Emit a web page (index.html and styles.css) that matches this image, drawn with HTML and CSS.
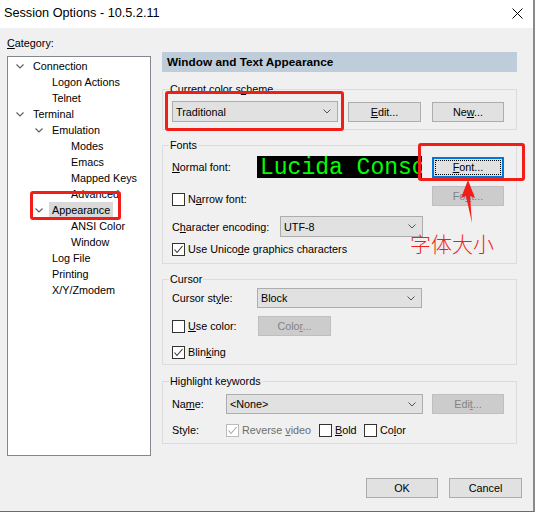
FILE: index.html
```html
<!DOCTYPE html>
<html>
<head>
<meta charset="utf-8">
<title>Session Options</title>
<link rel="stylesheet" href="styles.css">
</head>
<body>
<div class="window">
  <div class="titlebar">
    <span class="title">Session Options - 10.5.2.11</span>
    <svg class="close" width="11" height="11" viewBox="0 0 11 11"><path d="M0.5 0.5 L10.5 10.5 M10.5 0.5 L0.5 10.5" stroke="#000" stroke-width="1" fill="none"/></svg>
  </div>
  <div class="content">
    <div class="left">
      <div class="cat-label"><u>C</u>ategory:</div>
      <div class="tree">
        <div class="row l0"><span class="chev"><svg width="8" height="5" viewBox="0 0 8 5"><polyline points="0.5,0.5 4,4 7.5,0.5" fill="none" stroke="#606060" stroke-width="1.2"/></svg></span><span class="txt">Connection</span></div>
        <div class="row l1"><span class="chev"></span><span class="txt">Logon Actions</span></div>
        <div class="row l1"><span class="chev"></span><span class="txt">Telnet</span></div>
        <div class="row l0"><span class="chev"><svg width="8" height="5" viewBox="0 0 8 5"><polyline points="0.5,0.5 4,4 7.5,0.5" fill="none" stroke="#606060" stroke-width="1.2"/></svg></span><span class="txt">Terminal</span></div>
        <div class="row l1"><span class="chev"><svg width="8" height="5" viewBox="0 0 8 5"><polyline points="0.5,0.5 4,4 7.5,0.5" fill="none" stroke="#606060" stroke-width="1.2"/></svg></span><span class="txt">Emulation</span></div>
        <div class="row l2"><span class="chev"></span><span class="txt">Modes</span></div>
        <div class="row l2"><span class="chev"></span><span class="txt">Emacs</span></div>
        <div class="row l2"><span class="chev"></span><span class="txt">Mapped Keys</span></div>
        <div class="row l2"><span class="chev"></span><span class="txt">Advanced</span></div>
        <div class="row l1 sel"><span class="chev"><svg width="8" height="5" viewBox="0 0 8 5"><polyline points="0.5,0.5 4,4 7.5,0.5" fill="none" stroke="#606060" stroke-width="1.2"/></svg></span><span class="txt">Appearance</span></div>
        <div class="row l2"><span class="chev"></span><span class="txt">ANSI Color</span></div>
        <div class="row l2"><span class="chev"></span><span class="txt">Window</span></div>
        <div class="row l1"><span class="chev"></span><span class="txt">Log File</span></div>
        <div class="row l1"><span class="chev"></span><span class="txt">Printing</span></div>
        <div class="row l1"><span class="chev"></span><span class="txt">X/Y/Zmodem</span></div>
      </div>
    </div>

    <div class="right">
      <div class="header">Window and Text Appearance</div>

      <fieldset class="group g-scheme">
        <legend>Current color s<u>c</u>heme</legend>
        <div class="gbody">
          <div class="line">
            <div class="select w-scheme"><span>Traditional</span><svg width="8" height="5" viewBox="0 0 8 5"><polyline points="0.5,0.5 4,4 7.5,0.5" fill="none" stroke="#555" stroke-width="1"/></svg></div>
            <div class="btn w-edit"><span><u>E</u>dit...</span></div>
            <div class="btn w-new"><span>Ne<u>w</u>...</span></div>
          </div>
        </div>
      </fieldset>

      <fieldset class="group g-fonts">
        <legend>Fonts</legend>
        <div class="gbody">
          <div class="line r-normal">
            <span class="lbl w85"><u>N</u>ormal font:</span>
            <div class="preview">Lucida Console</div>
            <div class="btn focus push"><span><u>F</u>ont...</span></div>
          </div>
          <div class="line r-narrow">
            <span class="chk low"><span class="cb"></span><span>N<u>a</u>rrow font:</span></span>
            <div class="btn disabled push"><span>Fo<u>n</u>t...</span></div>
          </div>
          <div class="line r-enc">
            <span class="lbl w108">C<u>h</u>aracter encoding:</span>
            <div class="select w-enc"><span>UTF-8</span><svg width="8" height="5" viewBox="0 0 8 5"><polyline points="0.5,0.5 4,4 7.5,0.5" fill="none" stroke="#555" stroke-width="1"/></svg></div>
          </div>
          <div class="line r-uni">
            <span class="chk"><span class="cb"><svg width="11" height="11" viewBox="0 0 11 11"><polyline points="1.5,5.5 4,8.5 9.5,2" fill="none" stroke="#333" stroke-width="1.1"/></svg></span><span>Use Unico<u>d</u>e graphics characters</span></span>
          </div>
        </div>
      </fieldset>

      <fieldset class="group g-cursor">
        <legend>Cursor</legend>
        <div class="gbody">
          <div class="line r-cstyle">
            <span class="lbl w85">Cursor st<u>y</u>le:</span>
            <div class="select w-cstyle"><span>Block</span><svg width="8" height="5" viewBox="0 0 8 5"><polyline points="0.5,0.5 4,4 7.5,0.5" fill="none" stroke="#555" stroke-width="1"/></svg></div>
          </div>
          <div class="line r-ucolor">
            <span class="chk w86"><span class="cb"></span><span><u>U</u>se color:</span></span>
            <div class="btn disabled w-color"><span>Colo<u>r</u>...</span></div>
          </div>
          <div class="line r-blink">
            <span class="chk"><span class="cb"><svg width="11" height="11" viewBox="0 0 11 11"><polyline points="1.5,5.5 4,8.5 9.5,2" fill="none" stroke="#333" stroke-width="1.1"/></svg></span><span>Blin<u>k</u>ing</span></span>
          </div>
        </div>
      </fieldset>

      <fieldset class="group g-hl">
        <legend>Highlight keywords</legend>
        <div class="gbody">
          <div class="line r-name">
            <span class="lbl w54">Na<u>m</u>e:</span>
            <div class="select w-name"><span>&lt;None&gt;</span><svg width="8" height="5" viewBox="0 0 8 5"><polyline points="0.5,0.5 4,4 7.5,0.5" fill="none" stroke="#555" stroke-width="1"/></svg></div>
            <div class="btn disabled push"><span>Edi<u>t</u>...</span></div>
          </div>
          <div class="line r-style">
            <span class="lbl w54">Style:</span>
            <span class="chk w93 off"><span class="cb"><svg width="11" height="11" viewBox="0 0 11 11"><polyline points="1.5,5.5 4,8.5 9.5,2" fill="none" stroke="#a8a8a8" stroke-width="1.1"/></svg></span><span>Reverse <u>v</u>ideo</span></span>
            <span class="chk w45"><span class="cb"></span><span><u>B</u>old</span></span>
            <span class="chk"><span class="cb"></span><span>Co<u>l</u>or</span></span>
          </div>
        </div>
      </fieldset>

      <div class="footer">
        <div class="btn w-ok"><span>OK</span></div>
        <div class="btn w-cancel"><span>Cancel</span></div>
      </div>
    </div>
  </div>

  <div class="ann ann-tree"></div>
  <div class="ann ann-scheme"></div>
  <div class="ann ann-font"></div>
  <svg class="ann-arrow" width="18" height="46" viewBox="0 0 18 46"><polygon points="8,1 1,19 6,17 12,44 10,17 15,19" fill="#f21d16"/></svg>
  <div class="ann-text">字体大小</div>
</div>
</body>
</html>
```

FILE: styles.css
```css
* { box-sizing: border-box; }
html, body { margin: 0; padding: 0; }
body {
  background: #ffffff;
  width: 537px;
  height: 514px;
  overflow: hidden;
  font-family: "Liberation Sans", Arial, sans-serif;
  font-size: 10.8px;
  color: #000;
}
u { text-decoration: underline; text-underline-offset: 1px; text-decoration-thickness: 1px; }

.window {
  position: relative;
  width: 535px;
  height: 512px;
  background: #f0f0f0;
  border-right: 2px solid #8a8a8a;
  border-bottom: 1px solid #6b6b6b;
  display: flex;
  flex-direction: column;
}

.titlebar {
  height: 28px;
  flex: none;
  background: #fff;
  display: flex;
  align-items: center;
  justify-content: space-between;
  padding: 0 10px 2px 4px;
}
.title { font-size: 12.7px; line-height: 16px; }
.close { display: block; }

.content { flex: 1; display: flex; }

.left { margin-left: 7px; width: 144px; padding-top: 8px; }
.cat-label { height: 14px; line-height: 14px; margin-bottom: 6px; }
.tree {
  height: 400px;
  background: #fff;
  border: 1px solid #828790;
  padding-top: 1px;
}
.row { height: 16px; display: flex; align-items: center; white-space: nowrap; }
.l0 { padding-left: 6px; }
.l1 { padding-left: 25px; }
.l2 { padding-left: 44px; }
.chev { width: 16px; flex: none; display: flex; align-items: center; padding-left: 2px; }
.chev svg { display: block; }
.txt { padding: 0 3px; line-height: 16px; }
.sel .txt { background: #d9d9d9; }

.right { margin-left: 11px; width: 355px; padding-top: 24px; }
.header {
  height: 20px;
  line-height: 20px;
  background: #bfcddb;
  font-weight: bold;
  font-size: 11.8px;
  padding-left: 5px;
}

.group {
  margin: 0;
  padding: 0;
  min-width: 0;
  border: 1px solid #dcdcdc;
}
.group legend {
  margin-left: 6px;
  padding: 0 1px;
  line-height: 14px;
  font-size: 10.8px;
}
.g-scheme { margin-top: 10px; }
.g-scheme .gbody { padding: 5px 12px 7px 9px; }
.g-fonts { margin-top: 8px; }
.g-fonts .gbody { padding: 4px 12px 6px 9px; }
.g-cursor { margin-top: 8px; }
.g-cursor .gbody { padding: 2px 12px 4px 9px; }
.g-hl { margin-top: 9px; }
.g-hl .gbody { padding: 6px 12px 5px 9px; }

.line { display: flex; align-items: center; }
.r-narrow { margin-top: 8px; }
.r-enc { margin-top: 10px; }
.r-uni { margin-top: 4px; height: 16px; }
.r-ucolor { margin-top: 8px; }
.r-blink { margin-top: 8px; height: 16px; }
.r-style { margin-top: 8px; height: 16px; }

.lbl { flex: none; white-space: nowrap; }
.w85 { width: 85px; }
.w108 { width: 108px; }
.w54 { width: 54px; }
.w86 { width: 86px; }
.w93 { width: 93px; }
.w45 { width: 45px; }

.select {
  flex: none;
  height: 20px;
  display: flex;
  align-items: center;
  justify-content: space-between;
  background: #e1e1e1;
  border: 1px solid #adadad;
  padding: 0 6px 0 3px;
  white-space: nowrap;
}
.select svg { display: block; }
.w-scheme { width: 166px; height: 21px; }
.w-enc { width: 143px; height: 21px; }
.w-cstyle { width: 165px; }
.w-name { width: 197px; }

.btn {
  flex: none;
  width: 72px;
  height: 20px;
  display: flex;
  align-items: center;
  justify-content: center;
  background: #e1e1e1;
  border: 1px solid #adadad;
  white-space: nowrap;
}
.btn.disabled { background: #cccccc; border-color: #bfbfbf; color: #838383; }
.btn.focus {
  height: 21px;
  border: 2px solid #0078d7;
  outline: 1px dotted #000;
  outline-offset: -4px;
}
.push { margin-left: auto; }
.w-edit { width: 73px; margin-left: 10px; }
.w-new { margin-left: 11px; }
.w-color { width: 73px; }

.preview {
  flex: none;
  width: 165px;
  height: 22px;
  background: #000;
  color: #00ff00;
  font-family: "Liberation Mono", "DejaVu Sans Mono", monospace;
  font-size: 23px;
  line-height: 24px;
  padding-left: 3px;
  overflow: hidden;
  white-space: nowrap;
}

.chk { display: flex; align-items: center; white-space: nowrap; flex: none; }
.chk.low { align-self: flex-end; height: 14px; }
.cb {
  width: 13px;
  height: 13px;
  flex: none;
  border: 1px solid #333;
  background: #fff;
  margin-right: 3px;
}
.cb svg { display: block; }
.chk.off { color: #6d6d6d; }
.chk.off .cb { border-color: #bcbcbc; }

.footer {
  display: flex;
  justify-content: flex-end;
  gap: 11px;
  margin-top: 34px;
  margin-right: -5px;
}
.w-ok { width: 72px; }
.w-cancel { width: 73px; }

.ann {
  position: absolute;
  border: 3px solid #f21d16;
  border-radius: 3px;
}
.ann-tree { left: 30px; top: 191px; width: 91px; height: 29px; }
.ann-scheme { left: 165px; top: 91px; width: 179px; height: 40px; }
.ann-font { left: 418px; top: 143px; width: 107px; height: 38px; }
.ann-arrow { position: absolute; left: 460px; top: 179px; display: block; }
.ann-text {
  position: absolute;
  left: 410px;
  top: 232px;
  font-family: "Noto Sans CJK SC", sans-serif;
  font-size: 21px;
  line-height: 22px;
  color: #f21d16;
  font-weight: 300;
}
```
